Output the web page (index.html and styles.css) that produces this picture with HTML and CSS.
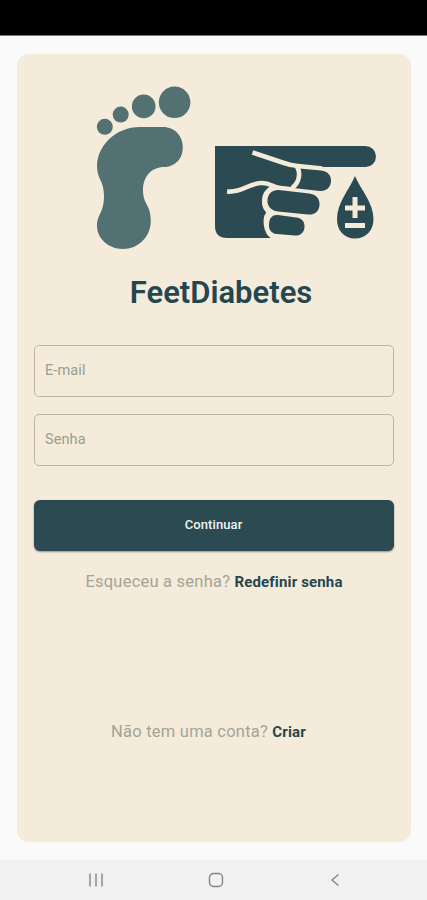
FILE: index.html
```html
<!DOCTYPE html>
<html lang="pt-BR">
<head>
<meta charset="utf-8">
<title>FeetDiabetes</title>
<link rel="stylesheet" href="styles.css">
</head>
<body>
<div class="status"></div>
<main class="screen">
  <section class="card">
    <svg class="art" viewBox="17 54 394 200" aria-hidden="true">
      <g fill="#537173">
        <circle cx="104.8" cy="126.8" r="8"/>
        <circle cx="120.7" cy="114.6" r="8"/>
        <circle cx="143.7" cy="106.4" r="11.8"/>
        <circle cx="174.6" cy="102.3" r="15.8"/>
        <path d="M140 127H163C175 127 182.800 136 182.800 147.500C182.800 159 175 167 164 167C152 167 143 176 143 190C143 205 150.800 204 150.800 221C150.800 237 138 249 123 249C108 249 97 238 97 226C97 214 104 213 104 196C104 180 97 180 97 165C98 145 116 127 140 127Z"/>
      </g>
      <path fill="#2b4a52" d="M215 146H365.500A10.500 10.500 0 0 1 365.500 167H325L300 166L296 188L270 190L267 214L274 238H227Q215 238 215 226Z"/>
      <path fill="#f4ebda" d="M270 187L316 190V238H274L265 222L266 213L264 202Z"/>
      <g fill="none" stroke="#f4ebda" stroke-linejoin="round">
        <path stroke-width="4.600" d="M252.500 152.500L284 163Q291 165.500 298 166L322 168.500"/>
        <path stroke-width="4.600" d="M227 191.500C243 193 248 183 262 183C271 183 272 187 280 188L298 190"/>
        <path stroke-width="4.600" d="M272 188C262 193 262 208 270 212C264 216 264 232 274 237.500"/>
      </g>
      <path fill="#2b4a52" d="M299 168.500L321 170.500C328 171 331.500 176 331 181.500C330.500 187.500 326 191.500 320 191L293 188Z"/>
      <path stroke="#f4ebda" fill="none" stroke-width="4.600" d="M296.500 166C301.500 173 299 183 292 188"/>
      <g fill="#2b4a52">
        <path d="M279 190L309 193.500C316 194 320 199 319.500 205C319 212 314 215 308 214.500L278 211.500C271 210.500 267 206 267.500 200C268 193 273 189.500 279 190Z"/>
        <path d="M278 215L296 217.500C302 218 305 222 304.500 227C304 233 300 236 295 235.500L277 234C271 233.500 268.500 229 269 224C269.500 218 272 214.500 278 215Z"/>
        <path d="M355 176C361 190 373.500 203 373.500 219C373.500 230.500 366 238.500 355 238.500C344 238.500 337 230.500 337 219C337 203 349 190 355 176Z"/>
      </g>
      <path stroke="#f4ebda" stroke-width="5" fill="none" d="M355 197V218M345 208H365M345 225.500H365"/>
    </svg>
    <h1 class="title">FeetDiabetes</h1>
    <form class="form">
      <input class="field" type="email" placeholder="E-mail">
      <input class="field" type="password" placeholder="Senha">
      <button class="submit" type="button">Continuar</button>
    </form>
    <p class="line reset">Esqueceu a senha? <b>Redefinir senha</b></p>
    <p class="line signup">Não tem uma conta? <b>Criar</b></p>
  </section>
</main>
<nav class="nav">
  <svg viewBox="0 0 16 16"><path d="M2 1.500V14.500M8 1.500V14.500M14 1.500V14.500"/></svg>
  <svg viewBox="0 0 16 16"><rect x="1.500" y="1.500" width="13" height="13" rx="4"/></svg>
  <svg viewBox="0 0 16 16"><path d="M11.500 2.500L5 8L11.500 13.500"/></svg>
</nav>
</body>
</html>
```
FILE: styles.css
```css
* { box-sizing: border-box; }
body {
  margin: 0;
  height: 900px;
  display: flex;
  flex-direction: column;
  overflow: hidden;
  background: #fafafa;
  font-family: Roboto, sans-serif;
}
.status { height: 36px; background: #000; border-bottom: 1px solid #777; }
.screen { flex: 1; padding: 18px 16px 18px 17px; }
.card {
  height: 788px;
  background: #f4ebda;
  border-radius: 12px;
  display: flex;
  flex-direction: column;
}
.art { display: block; width: 394px; height: 200px; }
.title {
  margin: 18px 0 0;
  padding-left: 14px;
  text-align: center;
  font-size: 31px;
  line-height: 41px;
  font-weight: 600;
  color: #24474f;
}
.form {
  display: flex;
  flex-direction: column;
  gap: 17px;
  margin: 32px 17px 0;
}
.field {
  height: 52px;
  padding: 0 10px 2px;
  border: 1px solid #bfb5a5;
  border-radius: 5px;
  background: transparent;
  font: 400 14.500px Roboto, sans-serif;
  letter-spacing: 0.1px;
}
.field::placeholder { color: #9c9d8e; opacity: 1; }
.submit {
  height: 51px;
  margin-top: 17px;
  padding: 0 1px 2px 0;
  border: 0;
  border-radius: 6px;
  background: #2b4a52;
  box-shadow: 0 1px 2px #0006;
  color: #f1f4f4;
  font: 500 13px Roboto, sans-serif;
  letter-spacing: 0.1px;
}
.line {
  margin: 0;
  text-align: center;
  font-size: 16.500px;
  letter-spacing: 0.22px;
  line-height: 20px;
  color: #a4a496;
}
.line b { font-size: 15px; font-weight: 700; letter-spacing: 0.15px; color: #24474f; }
.reset { margin-top: 21px; }
.signup { margin-top: 130px; padding-right: 11px; }
.nav {
  height: 40px;
  display: flex;
  justify-content: space-between;
  align-items: center;
  padding: 0 84px 0 88px;
  background: #f1f1f1;
}
.nav svg { width: 16px; height: 16px; fill: none; stroke: #858585; stroke-width: 1.400; }
```
